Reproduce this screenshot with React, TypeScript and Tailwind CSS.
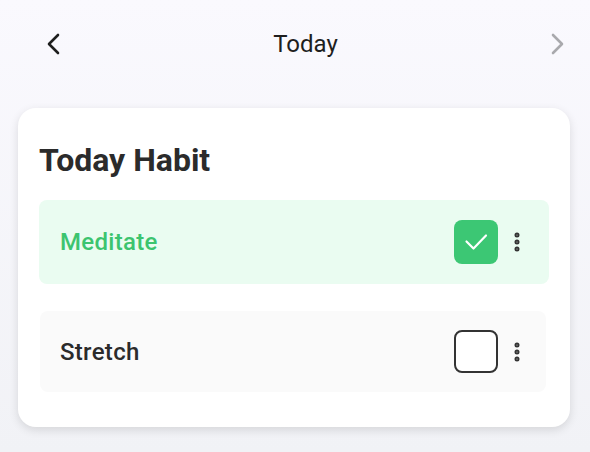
import { MoreVertical } from "lucide-react";

const habits = [
  { id: "meditate", name: "Meditate", done: true },
  { id: "stretch", name: "Stretch", done: false },
];

function Chevron({ dir, className }: { dir: "left" | "right"; className: string }) {
  return (
    <svg width="16" height="22" viewBox="0 0 16 22" fill="none" className={className}>
      <path
        d={dir === "left" ? "M13 2 L4 11 L13 20" : "M3 2 L12 11 L3 20"}
        stroke="currentColor"
        strokeWidth="2.6"
        strokeLinecap="round"
        strokeLinejoin="round"
      />
    </svg>
  );
}

function Checkbox({ checked }: { checked: boolean }) {
  if (checked) {
    return (
      <div className="w-[44px] h-[44px] rounded-[8px] bg-[#3cc774]">
        <svg width="44" height="44" viewBox="0 0 44 44" fill="none">
          <path d="M12.5 21.5 L19.5 28.5 L32 15.5" stroke="white" strokeWidth="2.2" strokeLinecap="round" strokeLinejoin="round" />
        </svg>
      </div>
    );
  }
  return <div className="w-[44px] h-[43px] rounded-[8px] border-2 border-[#333333] bg-white" />;
}

export default function App() {
  return (
    <div
      className="w-[590px] h-[452px] bg-gradient-to-b from-[#faf9fe] to-[#f1f2f6] overflow-hidden"
      style={{ fontFamily: "Roboto, 'Liberation Sans', sans-serif" }}
    >
      <div className="h-[88px] flex items-center justify-between pl-[45px] pr-[24px]">
        <Chevron dir="left" className="text-[#1e1e1e]" />
        <div className="text-[24px] text-[#1e1e1e]">Today</div>
        <Chevron dir="right" className="text-[#a9a9ad]" />
      </div>

      <div className="ml-[18px] w-[552px] mt-[20px] bg-white rounded-[18px] shadow-[0_3px_10px_rgba(0,0,0,0.12)] pt-[33px] pb-[35px] px-[21px]">
        <h1 className="text-[32px] leading-[38px] font-bold text-[#2b2b2b]">Today Habit</h1>
        <div className="mt-[21px] flex flex-col gap-[27px]">
          {habits.map((h) => (
            <div
              key={h.id}
              className={`flex items-center rounded-[8px] pl-[21px] pr-[20px] ${
                h.done ? "h-[84px] bg-[#eafcf1]" : "h-[81px] bg-[#fafafa] mr-[3px] ml-[1px]"
              }`}
            >
              <span
                className={`flex-1 text-[24px] font-medium tracking-[0.3px] ${
                  h.done ? "text-[#3cc46f]" : "text-[#2b2b2b] -ml-[1px]"
                }`}
              >
                {h.name}
              </span>
              <Checkbox checked={h.done} />
              <MoreVertical size={24} strokeWidth={3} className={`text-[#333333] ml-[7px] ${h.done ? "" : "-mr-[3px]"}`} />
            </div>
          ))}
        </div>
      </div>
    </div>
  );
}
